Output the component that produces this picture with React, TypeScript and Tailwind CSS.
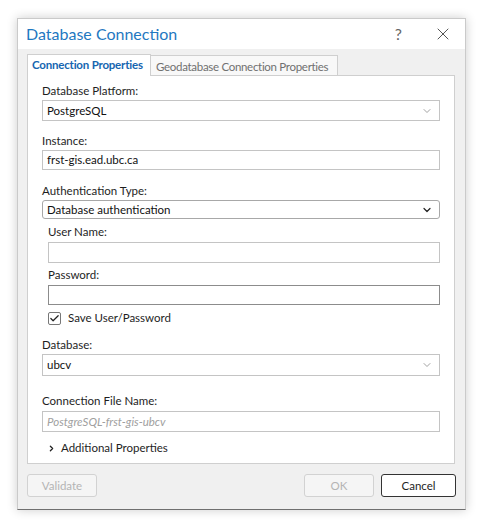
import { ChevronDown, ChevronRight, Check, X } from 'lucide-react';

const font = { fontFamily: 'Lato, "Noto Sans", sans-serif' };

function Label({ text, className = '' }: { text: string; className?: string }) {
  return <div className={`h-[16px] leading-[16px] text-[11.5px] text-[#1e1e1e] ${className}`}>{text}</div>;
}

function Select({ value, className = '', dark = false }: { value: string; className?: string; dark?: boolean }) {
  return (
    <div
      className={`flex items-center justify-between bg-white border pl-[4px] pr-[6px] text-[11.5px] text-[#111] ${
        dark ? 'border-[#a8a8a8] rounded-[3px]' : 'border-[#c4c4c4]'
      } ${className}`}
    >
      <span>{value}</span>
      <ChevronDown className={`w-[12px] h-[12px] ${dark ? 'text-[#222]' : 'text-[#8a8a8a]'}`} strokeWidth={dark ? 2.4 : 1.6} />
    </div>
  );
}

function Input({ value, className = '', placeholder, dark = false }: { value?: string; className?: string; placeholder?: string; dark?: boolean }) {
  return (
    <div
      className={`flex items-center bg-white border pl-[4px] text-[11.5px] ${dark ? 'border-[#8c8c8c]' : 'border-[#c4c4c4]'} ${className}`}
    >
      {value ? (
        <span className="text-[#111]">{value}</span>
      ) : placeholder ? (
        <span className="italic text-[#a0a0a0]">{placeholder}</span>
      ) : null}
    </div>
  );
}

export default function App() {
  return (
    <div className="w-[485px] h-[531px] bg-white pt-[18px] pl-[17px]" style={font}>
      <div className="w-[449px] h-[492px] flex flex-col bg-[#f0f0f0] border border-[#cacaca] border-b-[#6f6f6f] shadow-[0_0_10px_rgba(0,0,0,0.2)]">
        {/* Title bar */}
        <div className="h-[30px] shrink-0 bg-white flex items-center pl-[8px]">
          <span className="text-[16px] text-[#1f78c1] leading-[20px]">Database Connection</span>
          <span className="ml-auto text-[16px] text-[#666] leading-[20px] mr-[31px]">?</span>
          <X className="w-[20px] h-[20px] text-[#444] mr-[12px]" strokeWidth={1.1} />
        </div>

        {/* Body */}
        <div className="flex flex-col px-[9px] pt-[5px]">
          {/* Tabs */}
          <div className="flex items-end h-[22px]">
            <div className="relative z-10 w-[124px] h-[22px] bg-white border border-b-0 border-[#cfcfcf] pl-[4px] pt-[2px] text-[11.5px] font-bold tracking-[-0.2px] text-[#1565b0] leading-[16px] whitespace-nowrap">
              Connection Properties
            </div>
            <div className="w-[187px] h-[21px] bg-[#f8f8f8] border border-l-0 border-[#cfcfcf] pl-[5px] pt-[3px] text-[11.5px] tracking-[-0.3px] text-[#707070] leading-[16px] whitespace-nowrap">
              Geodatabase Connection Properties
            </div>
          </div>

          {/* Panel */}
          <div className="relative -mt-px w-[428px] h-[389px] bg-white border border-[#cfcfcf] px-[14px] flex flex-col">
            <Label text="Database Platform:" className="mt-[7px]" />
            <Select value="PostgreSQL" className="mt-[1px] h-[21px]" />

            <Label text="Instance:" className="mt-[12px]" />
            <Input value="frst-gis.ead.ubc.ca" className="mt-[1px] h-[20px]" />

            <Label text="Authentication Type:" className="mt-[13px]" />
            <Select value="Database authentication" className="mt-[1px] h-[19px]" dark />

            <div className="pl-[6px] flex flex-col">
              <Label text="User Name:" className="mt-[5px]" />
              <Input className="mt-[2px] h-[21px]" />

              <Label text="Password:" className="mt-[4px]" />
              <Input className="mt-[2px] h-[20px]" dark />

              <div className="mt-[5px] h-[16px] flex items-center">
                <div className="w-[13px] h-[13px] border border-[#777] rounded-[2px] flex items-center justify-center bg-white">
                  <Check className="w-[11px] h-[11px] text-[#222]" strokeWidth={2.6} />
                </div>
                <span className="ml-[7px] text-[11.5px] text-[#1e1e1e]">Save User/Password</span>
              </div>
            </div>

            <Label text="Database:" className="mt-[11px]" />
            <Select value="ubcv" className="mt-[1px] h-[22px]" />

            <Label text="Connection File Name:" className="mt-[17px]" />
            <Input placeholder="PostgreSQL-frst-gis-ubcv" className="mt-[2px] h-[21px]" />

            <div className="mt-[8px] h-[16px] flex items-center pl-[5px]">
              <ChevronRight className="w-[9px] h-[9px] text-[#222]" strokeWidth={3.5} />
              <span className="ml-[5px] text-[11.5px] text-[#1e1e1e]">Additional Properties</span>
            </div>
          </div>

          {/* Buttons */}
          <div className="mt-[10px] flex items-center h-[23px]">
            <button className="w-[70px] h-[23px] rounded-[3px] border border-[#d2d2d2] bg-[#f5f5f5] text-[11.5px] text-[#b4b4b4]">
              Validate
            </button>
            <button className="ml-auto w-[70px] h-[23px] rounded-[3px] border border-[#d2d2d2] bg-[#f5f5f5] text-[11.5px] text-[#b4b4b4]">
              OK
            </button>
            <button className="ml-[7px] w-[75px] h-[23px] rounded-[3px] border border-[#333] bg-white text-[11.5px] text-[#1e1e1e]">
              Cancel
            </button>
          </div>
        </div>
      </div>
    </div>
  );
}
